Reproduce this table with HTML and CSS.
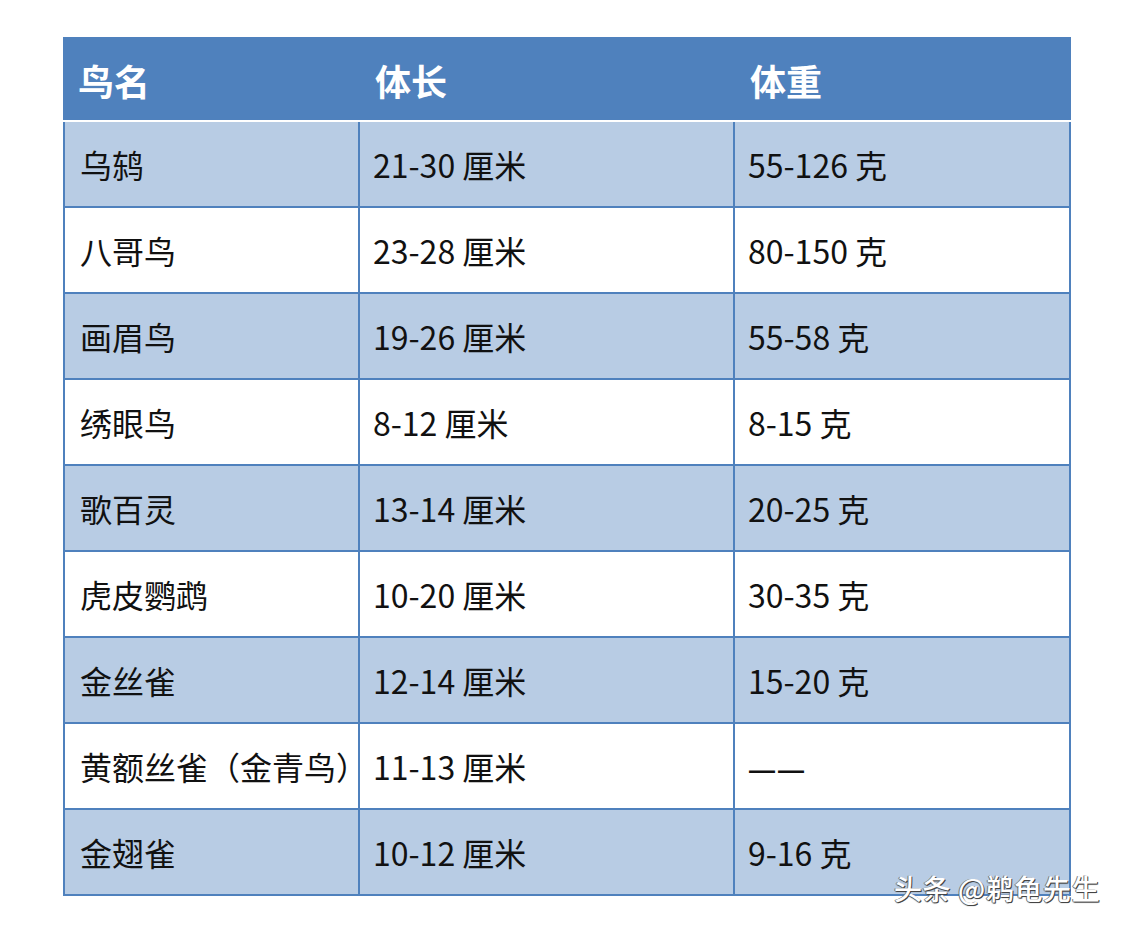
FILE: index.html
```html
<!DOCTYPE html>
<html lang="zh-CN">
<head>
<meta charset="utf-8">
<title>鸟类体长体重</title>
<link rel="stylesheet" href="styles.css">
</head>
<body>
<div class="page">
  <table class="birds">
    <colgroup>
      <col class="c1"><col class="c2"><col class="c3">
    </colgroup>
    <thead>
      <tr><th>鸟名</th><th>体长</th><th>体重</th></tr>
    </thead>
    <tbody>
      <tr class="odd"><td>乌鸫</td><td>21-30 厘米</td><td>55-126 克</td></tr>
      <tr><td>八哥鸟</td><td>23-28 厘米</td><td>80-150 克</td></tr>
      <tr class="odd"><td>画眉鸟</td><td>19-26 厘米</td><td>55-58 克</td></tr>
      <tr><td>绣眼鸟</td><td>8-12 厘米</td><td>8-15 克</td></tr>
      <tr class="odd"><td>歌百灵</td><td>13-14 厘米</td><td>20-25 克</td></tr>
      <tr><td>虎皮鹦鹉</td><td>10-20 厘米</td><td>30-35 克</td></tr>
      <tr class="odd"><td>金丝雀</td><td>12-14 厘米</td><td>15-20 克</td></tr>
      <tr><td>黄额丝雀（金青鸟）</td><td>11-13 厘米</td><td><span class="dashes"><span>—</span><span>—</span></span></td></tr>
      <tr class="odd"><td>金翅雀</td><td>10-12 厘米</td><td>9-16 克</td></tr>
    </tbody>
  </table>
  <div class="watermark">头条 @鹈龟先生</div>
</div>
</body>
</html>
```
FILE: styles.css
```css
html, body {
  margin: 0;
  padding: 0;
  background: #ffffff;
}
body {
  font-family: "Noto Sans CJK SC", "Noto Sans", sans-serif;
  color: #111;
}
.page {
  position: relative;
  width: 1129px;
  height: 931px;
  padding: 37px 0 0 63px;
  box-sizing: border-box;
}
.birds {
  border-collapse: separate;
  border-spacing: 0;
  table-layout: fixed;
  width: 1008px;
}
.c1 { width: 297px; }
.c2 { width: 375px; }
.c3 { width: 336px; }
.birds th {
  background: #4f81bd;
  color: #ffffff;
  font-weight: 700;
  font-size: 36px;
  text-align: left;
  height: 85px;
  padding: 2px 0 0 15px;
  border-bottom: 2px solid #ffffff;
  box-sizing: border-box;
  line-height: 1;
}
.birds td {
  font-size: 32px;
  line-height: 1;
  height: 86px;
  padding: 0 0 0 13px;
  box-sizing: border-box;
  border-right: 2px solid #4f81bd;
  border-bottom: 2px solid #4f81bd;
  vertical-align: middle;
  white-space: nowrap;
}
.birds td:first-child {
  border-left: 2px solid #4f81bd;
  padding-left: 15px;
}
.birds tr.odd td {
  background: #b8cce4;
}
.dashes {
  display: inline-flex;
  gap: 3px;
  margin-left: 1px;
  font-family: "Liberation Sans", sans-serif;
  font-size: 26px;
  font-weight: 700;
}
.watermark {
  position: absolute;
  left: 894px;
  top: 868px;
  font-size: 28px;
  font-weight: 500;
  color: #ffffff;
  letter-spacing: 0.6px;
  text-shadow: 1px 1px 0 #444, -1px 0 0 #777, 0 1px 1px #555;
  white-space: nowrap;
}
```
